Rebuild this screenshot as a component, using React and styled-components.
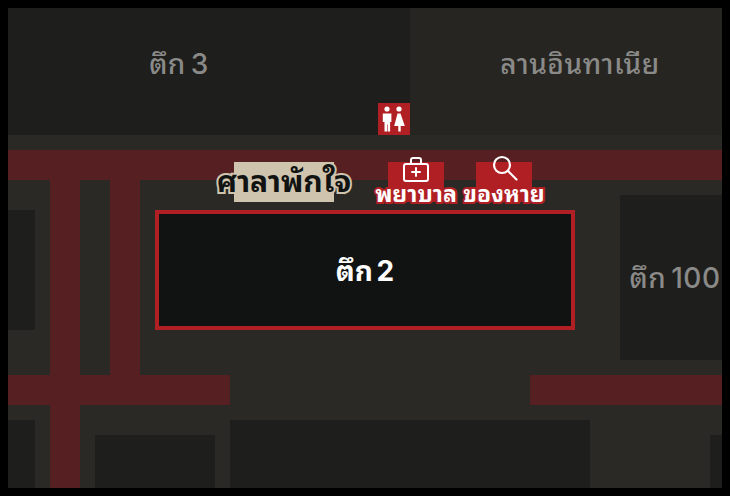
import styled, { createGlobalStyle } from "styled-components";

const GlobalStyle = createGlobalStyle`
  html, body {
    margin: 0;
    background: #000;
  }
  body {
    padding: 8px;
    font-family: Inter, "Noto Sans Thai Looped", "Noto Sans", sans-serif;
  }
`;

// map coordinates are relative to the canvas, which starts at 8,8 on the page
const roads = [
  { x: 0, y: 142, w: 714, h: 30 },
  { x: 42, y: 172, w: 30, h: 308 },
  { x: 102, y: 172, w: 30, h: 195 },
  { x: 0, y: 367, w: 222, h: 30 },
  { x: 522, y: 367, w: 192, h: 30 },
];

const blocks = [
  { x: -60, y: -16, w: 462, h: 143, label: "ตึก 3" },
  { x: 402, y: -16, w: 340, h: 143, label: "ลานอินทาเนีย", plaza: true },
  { x: 612, y: 187, w: 110, h: 165, label: "ตึก 100" },
  { x: -20, y: 202, w: 47, h: 120 },
  { x: -20, y: 412, w: 47, h: 90 },
  { x: 87, y: 427, w: 120, h: 70 },
  { x: 222, y: 412, w: 360, h: 90 },
  { x: 702, y: 427, w: 60, h: 70 },
];

function RestroomIcon() {
  return (
    <svg width="32" height="32" viewBox="0 0 32 32" fill="#fff">
      <circle cx="9" cy="6" r="2.600" />
      <path d="M4.800 10.500h8.600v8.500h-1.300v9.500h-2.500v-7h-.6v7H6.500V19H4.800z" />
      <circle cx="21" cy="6" r="2.600" />
      <path d="M19.500 10.500h3l4.300 12.500h-4.100v5.500h-2.400V23h-4.100z" />
    </svg>
  );
}

function KitIcon() {
  return (
    <svg width="28" height="28" viewBox="0 0 28 28" fill="none" stroke="#fff" strokeWidth="2" strokeLinecap="round">
      <rect x="2" y="9" width="24" height="17" rx="2" />
      <path d="M9 9V5a2 2 0 0 1 2-2h6a2 2 0 0 1 2 2v4" />
      <path d="M14 13v8M10 17h8" />
    </svg>
  );
}

function LensIcon() {
  return (
    <svg width="28" height="28" viewBox="0 0 28 28" fill="none" stroke="#fff" strokeWidth="2.200" strokeLinecap="round">
      <circle cx="12" cy="10" r="8" />
      <path d="M18 16l8.500 8.500" />
    </svg>
  );
}

export default function App() {
  return (
    <>
      <GlobalStyle />
      <MapCanvas>
        {roads.map((r, i) => (
          <Road key={i} $x={r.x} $y={r.y} $w={r.w} $h={r.h} />
        ))}
        {blocks.map((b, i) => (
          <Block key={i} $x={b.x} $y={b.y} $w={b.w} $h={b.h} $plaza={b.plaza}>
            {b.label}
          </Block>
        ))}
        <SelectedBlock>ตึก 2</SelectedBlock>
        <Restroom>
          <RestroomIcon />
        </Restroom>
        <RestArea>
          <RestLabel>ศาลาพักใจ</RestLabel>
        </RestArea>
        <Poi $x={380}>
          <KitIcon />
          <PoiLabel>พยาบาล</PoiLabel>
        </Poi>
        <Poi $x={468}>
          <LensIcon />
          <PoiLabel>ของหาย</PoiLabel>
        </Poi>
      </MapCanvas>
    </>
  );
}

const MapCanvas = styled.div`
  position: relative;
  width: 714px;
  height: 480px;
  overflow: hidden;
  background: #2a2925;
`;

const Road = styled.div`
  position: absolute;
  left: ${(p) => p.$x}px;
  top: ${(p) => p.$y}px;
  width: ${(p) => p.$w}px;
  height: ${(p) => p.$h}px;
  background: #562022;
`;

const Block = styled.div`
  position: absolute;
  left: ${(p) => p.$x}px;
  top: ${(p) => p.$y}px;
  width: ${(p) => p.$w}px;
  height: ${(p) => p.$h}px;
  box-sizing: border-box;
  padding-bottom: 4px;
  display: flex;
  align-items: center;
  justify-content: center;
  background: ${(p) => (p.$plaza ? "#262521" : "#1e1e1c")};
  color: #8a8a88;
  font-size: 28px;
  font-weight: 500;
  letter-spacing: 0.5px;
  word-spacing: -3px;
`;

const SelectedBlock = styled.div`
  position: absolute;
  left: 147px;
  top: 202px;
  width: 420px;
  height: 120px;
  box-sizing: border-box;
  padding-bottom: 4px;
  display: flex;
  align-items: center;
  justify-content: center;
  background: #111312;
  border: 4px solid #b01f24;
  color: #fff;
  font-size: 28px;
  font-weight: 700;
  word-spacing: -3px;
`;

const Restroom = styled.div`
  position: absolute;
  left: 370px;
  top: 95px;
  width: 32px;
  height: 32px;
  display: flex;
  background: #b01f24;
`;

const RestArea = styled.div`
  position: absolute;
  left: 226px;
  top: 154px;
  width: 100px;
  height: 40px;
  padding-bottom: 2px;
  box-sizing: border-box;
  display: flex;
  align-items: center;
  justify-content: center;
  background: #cfc4ae;
`;

const RestLabel = styled.span`
  font-size: 30px;
  font-weight: 700;
  line-height: 40px;
  white-space: nowrap;
  color: #111312;
  -webkit-text-stroke: 4px #cfc4ae;
  paint-order: stroke fill;
`;

const Poi = styled.div`
  position: absolute;
  left: ${(p) => p.$x}px;
  top: 154px;
  width: 56px;
  height: 40px;
  display: flex;
  flex-direction: column;
  align-items: center;
  background: #b01f24;

  svg {
    margin-top: -7px;
    flex: none;
  }
`;

const PoiLabel = styled.span`
  font-size: 23px;
  font-weight: 700;
  line-height: 28px;
  margin-top: -3px;
  white-space: nowrap;
  color: #fff;
  -webkit-text-stroke: 4px #b01f24;
  paint-order: stroke fill;
`;
